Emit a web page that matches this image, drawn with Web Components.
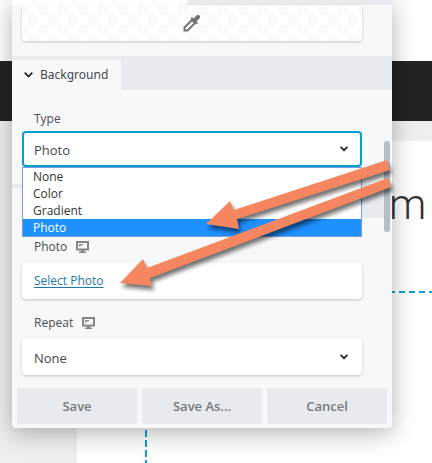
<!DOCTYPE html>
<html lang="en">
<head>
<meta charset="utf-8">
<title>Row settings</title>
<style>
html, body { height: 100%; margin: 0; }
body { overflow: hidden; font-family: "Open Sans", "Noto Sans", sans-serif; font-size: 12px; line-height: 17px; color: #4a4d50; }
</style>
</head>
<body>
<builder-app></builder-app>
<script>
const define = (name, html) => customElements.define(name, class extends HTMLElement {
  constructor() {
    super();
    const t = document.createElement('template');
    t.innerHTML = html;
    this.attachShadow({ mode: 'open' }).append(t.content.cloneNode(true));
  }
});

define('page-canvas', `
<style>
:host { display: flex; flex-direction: column; height: 100%; background: #fff; }
.top { height: 61px; }
.bar { height: 60px; background: #232323; }
.body { flex: 1; background: #efefef; padding: 20px 0 0 77px; display: flex; }
.content { flex: 1; background: #fff; padding-left: 68px; display: flex; flex-direction: column; overflow: hidden; }
.title { height: 150px; box-sizing: border-box; padding: 36px 0 0 244px; font: 300 42px/56px Roboto, sans-serif; color: #333; white-space: nowrap; }
.row { flex: 1; padding: 2px 0 0 2px;
 background: repeating-linear-gradient(90deg, #0f9fd4 0 6px, transparent 6px 10px) 4px 0 / 100% 2px no-repeat,
 repeating-linear-gradient(180deg, #0f9fd4 0 7px, transparent 7px 10px) 0 9px / 2px 100% no-repeat; }
</style>
<div class="top"></div><div class="bar"></div>
<div class="body"><div class="content"><div class="title">m</div><div class="row"></div></div></div>`);

define('settings-section', `
<style>
:host { display: block; }
.head { height: 34px; box-sizing: border-box; padding-top: 4px; background: #e7eaef; display: flex; }
button { border: 0; margin: 0; background: #f7f8fa; width: 109px; padding: 0 0 0 12px; display: flex; align-items: center; gap: 7px; font: 12px/20px "Noto Sans", sans-serif; color: #46494c; }
</style>
<div class="head"><button type="button"><svg width="9" height="6" viewBox="0 0 9 6" fill="none" stroke="#222" stroke-width="1.700"><path d="M.7.7 4.500 4.500 8.300.7"/></svg><slot name="title"></slot></button></div>
<slot></slot>`);

define('field-label', `
<style>
:host { display: flex; align-items: center; gap: 9px; height: 17px; padding-left: 12px; }
svg { display: none; }
:host([responsive]) svg { display: block; }
</style>
<slot></slot>
<svg width="13" height="12" viewBox="0 0 13 12"><path d="M1 1h11v7.500H1z" fill="none" stroke="#84878a" stroke-width="2"/><path d="M5 8.500h3v2h2V12H3v-1.500h2zM3 3h4v1.200H4.500v1.300H3z" fill="#84878a"/></svg>`);

define('field-card', `
<style>
:host { display: flex; align-items: center; height: 36px; background: #fff; border-radius: 4px; box-shadow: 0 1px 3px rgba(0,0,0,.2); position: relative; box-sizing: border-box; }
:host([active]) { box-shadow: inset 0 0 0 2px #00a0d2; }
::slotted(select) { appearance: none; border: 0; outline: 0; margin: 0; background: transparent; flex: 1; align-self: stretch; padding: 2px 12px 0; font: 13px "Open Sans", sans-serif; color: #46494c; }
::slotted(a) { margin: 0 12px; padding-bottom: 2px; color: #1c7aa6; text-underline-offset: 2px; }
svg { display: none; position: absolute; right: 14px; top: 15px; pointer-events: none; }
:host([arrow]) svg { display: block; }
:host([transparent]) { justify-content: center; background: repeating-conic-gradient(#fff 0 25%, #fafafa 0 50%) -4px 0 / 20px 20px; }
</style>
<slot></slot><svg width="8" height="6" viewBox="0 0 8 6" fill="none" stroke="#222" stroke-width="1.700"><path d="M.6.8 4 4.200 7.400.8"/></svg>`);

define('option-list', `
<style>
:host { display: block; position: absolute; z-index: 2; left: 0; right: 0; top: 100%; background: #fff; border: 1px solid #7a9bdc; font-size: 12px; line-height: 17px; color: #333; }
::slotted(div) { padding: 0 10px; }
::slotted([aria-selected=true]) { background: #1e90ff; color: #fff; }
</style><slot></slot>`);

define('panel-actions', `
<style>
:host { display: flex; gap: 5px; padding: 0 5px 4px; }
::slotted(button) { flex: 1 1 0; height: 36px; border: 0; border-radius: 3px; margin: 0; padding: 0; background: #e7eaef; color: #76797c; font: 600 13px "Open Sans", sans-serif; }
</style><slot></slot>`);

define('settings-panel', `
<style>
:host { display: block; background: #f7f8fa; border-radius: 0 0 4px 4px; box-shadow: 0 5px 25px rgba(0,0,0,.3); overflow: hidden; }
.tabs { height: 5px; background: linear-gradient(90deg, #fff 175px, #e7eaef 175px); }
.fields { padding: 0 30px 0 10px; }
.picker { padding-bottom: 15px; }
.type { padding-top: 20px; padding-bottom: 17px; }
.type field-card { margin-top: 4px; }
.rest { padding-top: 20px; padding-bottom: 13px; }
.rest field-card { margin-top: 8px; }
.gap { height: 15px; }
.scroll { position: absolute; right: 2px; top: 141px; width: 6px; height: 91px; border-radius: 3px; background: #b7bec7; }
</style>
<div class="tabs"></div>
<div class="fields picker"><field-card transparent><svg width="20" height="20" viewBox="0 0 20 20"><path d="M2.500 14.500 10 7l3 3-7.500 7.500h-3z" fill="#fff" stroke="#70747a" stroke-width="2"/><path d="m8.500 5.500 1.500-1.500 1.500 1.500 3-3a2.100 2.100 0 0 1 3 3l-3 3L16 10l-1.500 1.500z" fill="#70747a"/></svg></field-card></div>
<settings-section><span slot="title">Background</span>
 <div class="fields type"><field-label><label for="type">Type</label></field-label>
 <field-card active arrow><select id="type"><option>None</option><option>Color</option><option>Gradient</option><option selected>Photo</option></select>
 <option-list role="listbox" aria-label="Type"><div role="option">None</div><div role="option">Color</div><div role="option">Gradient</div><div role="option" aria-selected="true">Photo</div></option-list></field-card></div>
</settings-section>
<settings-section><span slot="title"></span>
 <div class="fields rest"><field-label responsive>Photo</field-label>
 <field-card><a href="#photo">Select Photo</a></field-card><div class="gap"></div>
 <field-label responsive><label for="repeat">Repeat</label></field-label>
 <field-card arrow><select id="repeat"><option>None</option></select></field-card></div>
</settings-section>
<panel-actions><button type="button">Save</button><button type="button">Save As...</button><button type="button">Cancel</button></panel-actions>
<div class="scroll"></div>`);

define('pointer-arrows', `
<style>:host { display: block; position: absolute; left: 0; top: 0; z-index: 5; pointer-events: none; } svg { display: block; filter: drop-shadow(2px 4px 2px rgba(0,0,0,.55)); }</style>
<svg width="432" height="463" viewBox="0 0 432 463" fill="#f58660"><path d="M206 224 230 201 234 210 387 160 390 170 237 219 239 229z"/><path d="M120 283 143 259 147 268 388 178 391 187 150 278 152 286z"/></svg>`);

define('builder-app', `
<style>
:host { display: block; position: relative; height: 100%; overflow: hidden; }
settings-panel { position: absolute; left: 12px; right: 40px; top: 0; }
</style>
<page-canvas></page-canvas><settings-panel></settings-panel><pointer-arrows></pointer-arrows>`);
</script>
</body>
</html>
